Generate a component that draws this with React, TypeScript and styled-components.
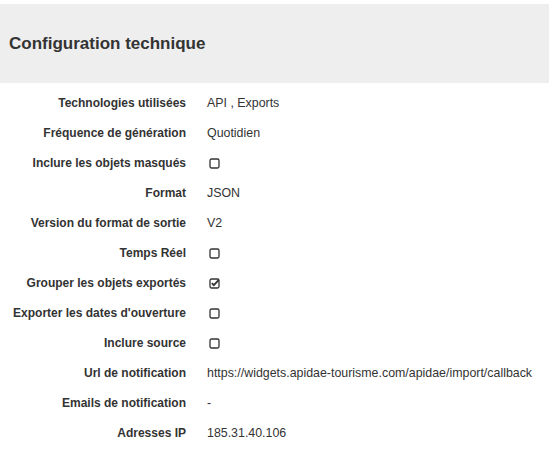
import React from "react";
import styled, { createGlobalStyle } from "styled-components";

const Global = createGlobalStyle`
  html, body { margin: 0; padding: 0; background: #fff; }
  body { font-family: "Liberation Sans", Arial, sans-serif; color: #333; }
`;

const Page = styled.div`
  padding-top: 4px;
`;

const Header = styled.div`
  background: #eeeeee;
  height: 79px;
  display: flex;
  align-items: center;
  padding-left: 9px;
`;

const Title = styled.h2`
  margin: 0;
  font-size: 17px;
  font-weight: bold;
  color: #333;
`;

const List = styled.div`
  margin-top: 5px;
  display: grid;
  grid-template-columns: 186px 1fr;
  column-gap: 21px;
`;

const Label = styled.div`
  height: 30px;
  display: flex;
  align-items: center;
  justify-content: flex-end;
  font-size: 12px;
  font-weight: bold;
  white-space: nowrap;
`;

const Value = styled.div`
  height: 30px;
  display: flex;
  align-items: center;
  font-size: 12.4px;
  white-space: nowrap;
`;

const Box = styled.svg`
  margin-left: 2px;
  display: block;
`;

const Check = ({ checked }: { checked: boolean }) => (
  <Box width="11" height="11" viewBox="0 0 11 11">
    <rect x="1" y="1" width="9" height="9" rx="1.5" fill="none" stroke="#333" strokeWidth="1.3" />
    {checked && (
      <path d="M2.8 5.2 L4.8 7.2 L9.8 1.8" fill="none" stroke="#333" strokeWidth="1.8" />
    )}
  </Box>
);

type Row = { label: string; value?: string; check?: boolean };

const rows: Row[] = [
  { label: "Technologies utilisées", value: "API , Exports" },
  { label: "Fréquence de génération", value: "Quotidien" },
  { label: "Inclure les objets masqués", check: false },
  { label: "Format", value: "JSON" },
  { label: "Version du format de sortie", value: "V2" },
  { label: "Temps Réel", check: false },
  { label: "Grouper les objets exportés", check: true },
  { label: "Exporter les dates d'ouverture", check: false },
  { label: "Inclure source", check: false },
  { label: "Url de notification", value: "https://widgets.apidae-tourisme.com/apidae/import/callback" },
  { label: "Emails de notification", value: "-" },
  { label: "Adresses IP", value: "185.31.40.106" },
];

export default function App() {
  return (
    <Page>
      <Global />
      <Header>
        <Title>Configuration technique</Title>
      </Header>
      <List>
        {rows.map((r) => (
          <React.Fragment key={r.label}>
            <Label>{r.label}</Label>
            <Value>{r.check !== undefined ? <Check checked={r.check} /> : r.value}</Value>
          </React.Fragment>
        ))}
      </List>
    </Page>
  );
}
